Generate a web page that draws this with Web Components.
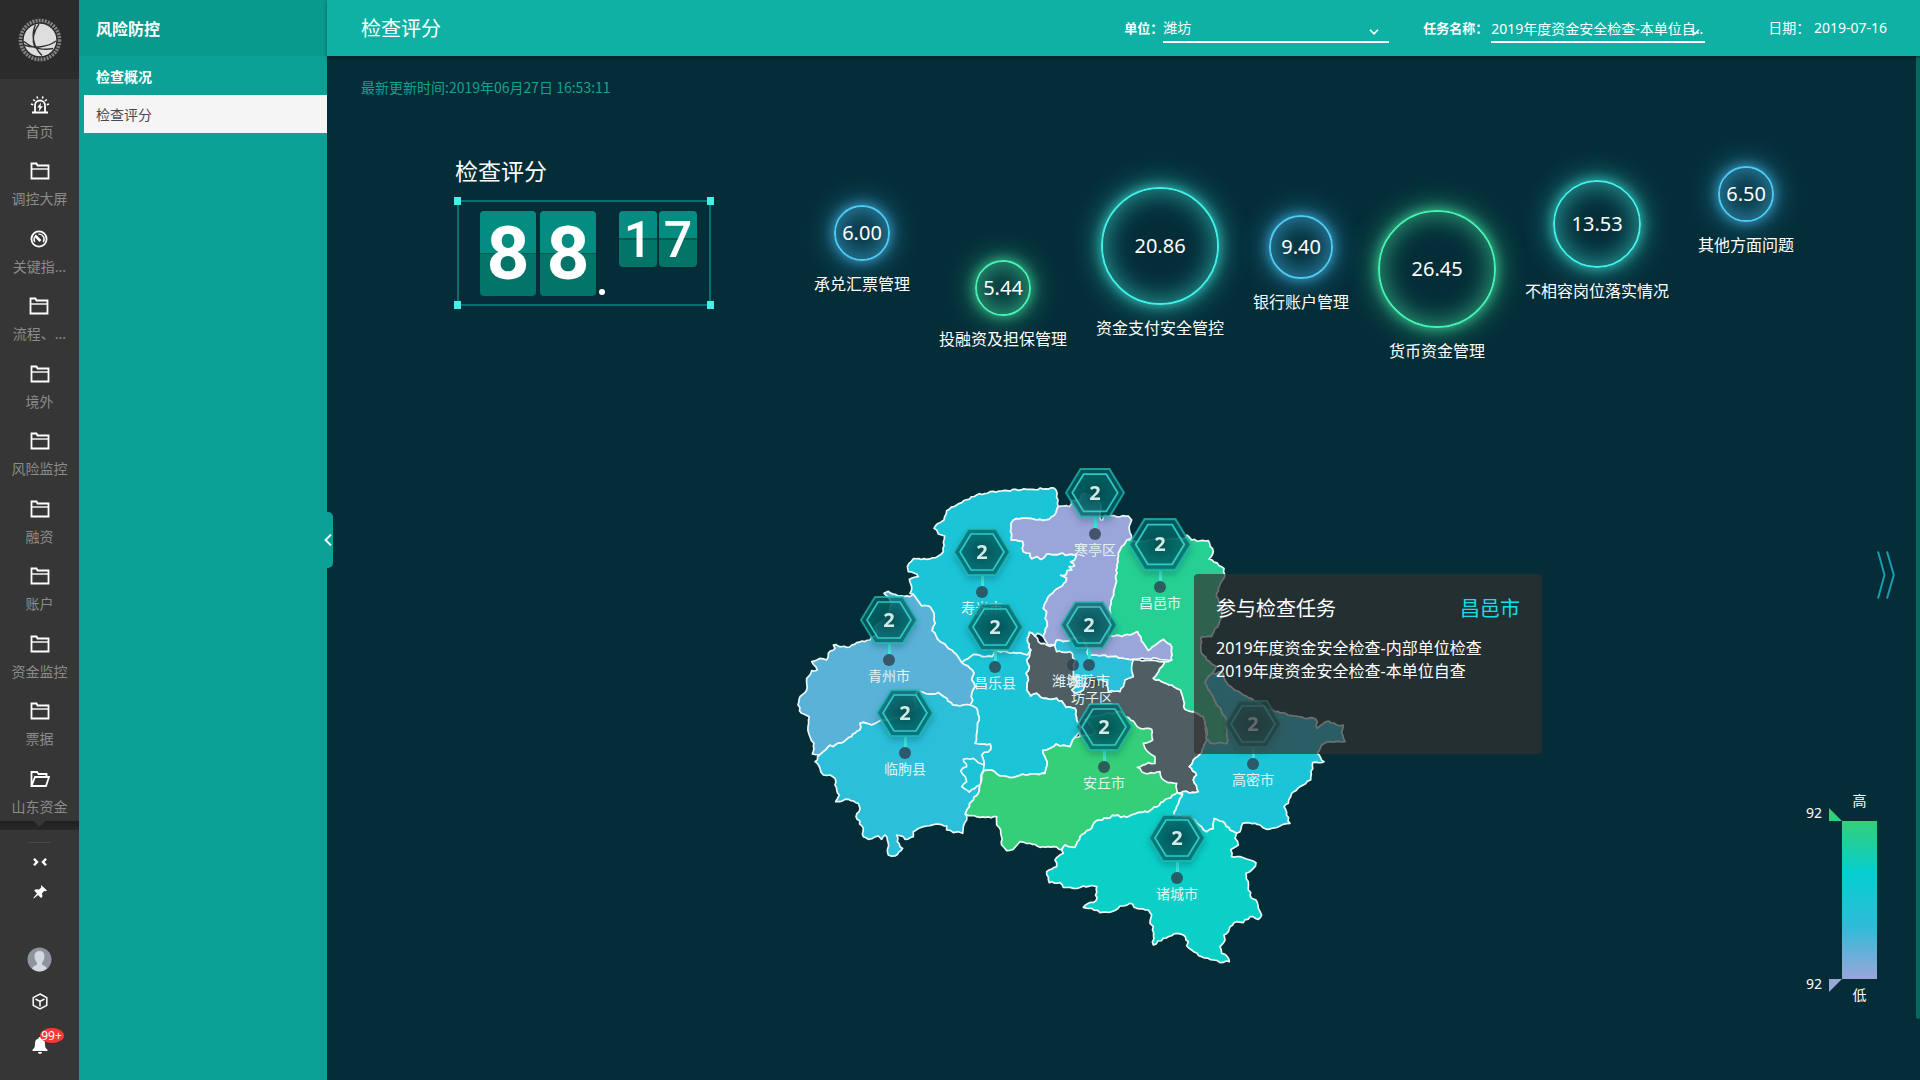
<!DOCTYPE html>
<html lang="zh-CN">
<head>
<meta charset="utf-8">
<title>检查评分</title>
<style>
html,body{margin:0;min-height:100vh;background:#042d38}
body{font:14px/20px "Noto Sans","Noto Sans CJK SC",sans-serif;color:#fff}
</style>
</head>
<body>
<risk-app></risk-app>
<script>
const define = (name, html, setup) => {
  const tpl = document.createElement('template');
  tpl.innerHTML = '<style>*{box-sizing:border-box}button{font:inherit;color:inherit;background:none;border:0;padding:0;margin:0;cursor:pointer}a{color:inherit;text-decoration:none}svg{display:block}</style>' + html;
  customElements.define(name, class extends HTMLElement {
    constructor() {
      super();
      this.attachShadow({mode: 'open'}).appendChild(tpl.content.cloneNode(true));
    }
    connectedCallback() { if (setup && !this.ready) { this.ready = true; setup(this, this.shadowRoot); } }
  });
};

/* ---------- dark icon rail ---------- */
const icons = {
  siren: '<path d="M2 17.500h16M5 17V10.500a5 5 0 0 1 10 0V17" /><path stroke-width="1.600" d="M1 9l2.200.8M19 9l-2.200.8M3.200 4.500L5 6M16.800 4.500L15 6M7 1.500l.6 2M13 1.500l-.6 2"/><path fill="#fff" stroke="none" d="M11.200 7.500l-4 5h2.300l-.8 4 4.200-5.300h-2.400z"/>',
  folder: '<path d="M1.500 16.500v-15h5l1 2h11v13z"/><path d="M1.500 7h17" stroke-width="1.400"/>',
  gauge: '<circle cx="10" cy="9" r="7.600"/><path d="M5.800 12A5.200 5.200 0 0 1 5.500 7M9.500 4.200a5 5 0 0 1 4.700 7.800" stroke-width="1.400"/><path d="M6 5.500l5.500 5.500" stroke-width="2.600"/>',
  open: '<path d="M1.500 16V2h5.500l1.500 2h8v3M1.500 16L5 7h14l-3 9z"/>'
};
define('rail-item', `
<style>
:host{flex:1;display:flex;flex-direction:column;align-items:center}
a{display:flex;flex-direction:column;align-items:center;gap:8px;padding-top:16px;color:#8b8b8b}
svg{width:20px;height:19px;fill:none;stroke:#fff;stroke-width:1.800}
</style>
<a href="#"><svg viewBox="0 0 20 19"></svg><slot></slot></a>`,
(el, root) => { root.querySelector('svg').innerHTML = icons[el.getAttribute('icon')]; });

define('side-rail', `
<style>
:host{display:flex;flex-direction:column;width:79px;flex:none;background:#363636}
.logo{height:79px;display:grid;place-items:center;background:#2b2b2b}
nav{flex:1;display:flex;flex-direction:column}
.edge{height:9px;background:linear-gradient(#202020,#292929)}
.edge i{display:block;width:12px;height:6px;margin:0 auto;background:#363636;clip-path:polygon(0 0,100% 0,50% 100%)}
.foot{height:250px;display:flex;flex-direction:column;align-items:center}
hr{width:23px;border:0;border-top:1px solid #484848;margin:12px 0 12px}
.foot button{display:grid;place-items:center;width:28px;height:14px}
.foot .pin{margin-top:15px;height:16px}
.foot .user{margin-top:46px;height:26px}
.foot .cube{margin-top:20px;height:18px}
.foot .bell{position:relative;margin-top:25px;height:20px}
.bell span{position:absolute;left:14px;top:-7px;width:24px;height:15px;border-radius:50%;background:#fa3836;font-size:12px;line-height:15px}
</style>
<div class="logo"><svg width="46" height="46" viewBox="0 0 46 46">
<circle cx="23" cy="23" r="19.500" fill="none" stroke="#858585" stroke-width="3.600" stroke-dasharray="2 1.100"/>
<circle cx="23" cy="23" r="16.300" fill="#dedede"/>
<g fill="none" stroke="#333" stroke-width="1.400"><path d="M18.500 7.500c-4 9-3.500 21 6.500 31M22 7c-6 8-7 17-4 24M7 28c10 4 24 2 32-4M7 24.500c8 7 20 9 29 7"/></g>
</svg></div>
<nav>
<rail-item icon="siren">首页</rail-item><rail-item icon="folder">调控大屏</rail-item><rail-item icon="gauge">关键指...</rail-item>
<rail-item icon="folder">流程、...</rail-item><rail-item icon="folder">境外</rail-item><rail-item icon="folder">风险监控</rail-item>
<rail-item icon="folder">融资</rail-item><rail-item icon="folder">账户</rail-item><rail-item icon="folder">资金监控</rail-item>
<rail-item icon="folder">票据</rail-item><rail-item icon="open">山东资金</rail-item>
</nav>
<div class="edge"><i></i></div>
<div class="foot">
<hr>
<button aria-label="收起"><svg width="14" height="8" viewBox="0 0 14 8" fill="none" stroke="#fff" stroke-width="2.400"><path d="M1 .8L4 4 1 7.200M13 .8L10 4l3 3.200"/></svg></button>
<button class="pin" aria-label="固定"><svg width="14" height="14" viewBox="0 0 14 14" fill="#fff"><path d="M8 0l6 5.500-1.500.8-1.500-.3-2 2.500.5 3-1.500 1.500-3-3L.8 13.500.3 13l3.700-4.500-2.800-3L2.800 4.300l3.200.3L8.200 2.500z"/></svg></button>
<button class="user" aria-label="用户"><svg width="25" height="25" viewBox="0 0 25 25"><circle cx="12.500" cy="12.500" r="12" fill="#8d949d"/><path d="M12.500 4c3.300 0 5 2 5 5.200 0 2.800-1.200 5.300-2.500 6.600v1.500c1 1.500 4 1.700 5.200 4.300a12 12 0 0 1-15.400 0C6 19 9 18.800 10 17.300v-1.500C8.700 14.500 7.500 12 7.500 9.200 7.500 6 9.200 4 12.500 4z" fill="#d3d9e1"/></svg></button>
<button class="cube" aria-label="应用"><svg width="16" height="17" viewBox="0 0 16 17" fill="none" stroke="#fff" stroke-width="1.500"><path d="M8 1l6.800 3.700v7.600L8 16l-6.800-3.700V4.700zM3.500 6L8 8.500 12.500 6M8 8.500V13.500"/></svg></button>
<button class="bell" aria-label="消息"><svg width="16" height="17" viewBox="0 0 16 17" fill="#fff"><path d="M8 0c1 0 1.500.6 1.500 1.400C12 2 13 4 13 6.500c0 4 1 5 2.500 6.300V14H.5v-1.200C2 11.500 3 10.500 3 6.500 3 4 4 2 6.500 1.400 6.500.6 7 0 8 0zM6 15h4c0 1-1 2-2 2s-2-1-2-2z"/></svg><span>99+</span></button>
</div>`);

/* ---------- green menu ---------- */
define('side-menu', `
<style>
:host{display:block;position:relative;width:248px;flex:none;background:#0ca196}
h2{margin:0;height:56px;padding:0 17px;font-size:16px;line-height:58px;background:#089a8d}
a{display:block;height:39px;padding:0 17px;line-height:41px;font-weight:700}
a.on{height:38px;margin-left:5px;padding:0 12px;line-height:40px;background:#f5f5f5;color:#454b55;font-weight:400}
button{position:absolute;z-index:3;left:244px;top:512px;width:10px;height:56px;border-radius:0 5px 5px 0;background:#0ca196;display:grid;place-items:center}
</style>
<h2>风险防控</h2>
<nav><a href="#">检查概况</a><a href="#" class="on">检查评分</a></nav>
<button aria-label="收起菜单"><svg width="8" height="12" viewBox="0 0 8 12" fill="none" stroke="#fff" stroke-width="1.800"><path d="M7 .5L1.500 6 7 11.500"/></svg></button>`);

/* ---------- header ---------- */
define('line-select', `
<style>
:host{display:flex;align-items:center}
label{font-size:13px;font-weight:700;padding-right:var(--label-gap,0)}
.box{position:relative;width:var(--w)}
select{appearance:none;display:block;width:100%;height:28px;margin:2px 0 0;padding:2px 0 var(--under,3px);border:0;border-bottom:2px solid #fff;border-radius:0;background:none;color:#fff;font:inherit;outline:0;overflow:hidden;white-space:nowrap}
option{color:#222}
svg{position:absolute;right:var(--arrow,5px);top:16px;pointer-events:none}
</style>
<label for="s"></label><div class="box"><select id="s"></select><svg width="10" height="6" viewBox="0 0 10 6" fill="none" stroke="#fff" stroke-width="1.600"><path d="M1 .8l4 4 4-4"/></svg></div>`,
(el, root) => {
  root.querySelector('label').textContent = el.getAttribute('label');
  root.querySelector('select').add(new Option(el.getAttribute('value')));
});
define('top-bar', `
<style>
:host{display:flex;align-items:center;height:56px;padding:0 33px 0 34px;background:#0eb1a3;box-shadow:0 1px 4px rgba(0,0,0,.4);position:relative;z-index:1}
h1{margin:0 auto 0 0;padding-top:2px;font-size:20px;font-weight:400;line-height:28px}
.unit{--w:226px;--arrow:10px;margin-right:34px}
.task{--w:214px;--label-gap:3px;--under:1px;margin-right:63px}
p{margin:0}
</style>
<h1>检查评分</h1>
<line-select class="unit" label="单位：" value="潍坊"></line-select>
<line-select class="task" label="任务名称：" value="2019年度资金安全检查-本单位自.."></line-select>
<p>日期： <time>2019-07-16</time></p>`);

/* ---------- flip score ---------- */
define('flip-digit', `
<style>
:host{display:grid;place-items:center;width:56px;height:85px;border-radius:4px;background:linear-gradient(#038c80 49%,#02594f 49%,#02594f 51%,#027468 51%);font:700 75px/85px "Liberation Sans Narrow",Roboto,sans-serif}
:host([small]){width:38px;height:56px;font-size:50px;line-height:58px;font-weight:500}
</style><slot></slot>`);
define('score-panel', `
<style>
:host{display:block;width:259px;flex:none}
h2{margin:0 0 13px;font-size:23px;font-weight:400;line-height:32px}
.frame{position:relative;display:flex;align-items:flex-start;margin:0 3px 0 2px;height:106px;padding:9px 0 0 21px;border:2px solid #07706f}
.frame i{position:absolute;width:7px;height:8px;background:#3ff3e6}
i:nth-of-type(1){left:-5px;top:-5px}i:nth-of-type(2){right:-5px;top:-5px}
i:nth-of-type(3){left:-5px;bottom:-5px}i:nth-of-type(4){right:-5px;bottom:-5px}
flip-digit+flip-digit{margin-left:4px}
b{width:6px;height:6px;border-radius:50%;background:#fff;margin:78px 14px 0 3px}
flip-digit[small]+flip-digit[small]{margin-left:2px}
</style>
<h2>检查评分</h2>
<div class="frame"><i></i><i></i><i></i><i></i>
<flip-digit>8</flip-digit><flip-digit>8</flip-digit><b></b><flip-digit small>1</flip-digit><flip-digit small>7</flip-digit></div>`);

/* ---------- bubbles ---------- */
define('metric-bubble', `
<style>
:host{display:flex;flex-direction:column;align-items:center;gap:12px;margin-top:var(--drop,0);font-size:16px;line-height:22px;white-space:nowrap}
div{display:grid;place-items:center;width:var(--d);height:var(--d);border-radius:50%;border:2px solid var(--c);font-size:20px;box-shadow:0 0 30px var(--g),inset 0 0 28px var(--g),0 0 12px var(--g)}
:host([tone=blue]){--c:#4ecbf5;--g:rgba(66,178,224,.75)}
:host([tone=green]){--c:#45f2b2;--g:rgba(64,214,150,.75)}
:host([tone=teal]){--c:#40f2e6;--g:rgba(58,210,200,.75)}
</style><div></div><slot></slot>`,
(el, root) => { root.querySelector('div').textContent = el.getAttribute('value'); });

/* ---------- map ---------- */
define('map-pin', `
<style>
:host{position:absolute;left:var(--x);top:var(--y);width:0;display:flex;flex-direction:column;align-items:center;color:#e2f3f3;font-size:14px;line-height:20px;white-space:nowrap}
.hex{flex:none;display:grid;width:var(--s,58px);filter:drop-shadow(0 4px 3px rgba(0,50,60,.3))}
.hex>*{grid-area:1/1}
.hex svg{width:100%;height:auto}
.hex b{place-self:center;font-size:20px;color:#d3e9e7}
.stem{flex:none;width:3px;height:10px;background:#3ce6dc}
.dot{flex:none;width:12px;height:12px;border-radius:50%;background:rgba(45,65,80,.8)}
:host([bare]) .hex,:host([bare]) .stem{display:none}
</style>
<div class="hex"><svg viewBox="0 0 58 48"><defs><radialGradient id="g"><stop offset="0" stop-color="#00494b" stop-opacity=".85"/><stop offset="1" stop-color="#04686a" stop-opacity=".45"/></radialGradient></defs>
<path d="M15 1h28l14 23-14 23H15L1 24z" fill="#036468" fill-opacity=".72" stroke="#1fbdb4" stroke-opacity=".75" stroke-width="2"/>
<path d="M18 6h22l11 18-11 18H18L7 24z" fill="url(#g)" stroke="#37dcd0" stroke-opacity=".85" stroke-width="1.700"/></svg><b>2</b></div>
<div class="stem"></div><div class="dot"></div><slot></slot>`);

define('task-tip', `
<style>
:host{display:block;position:absolute;left:414px;top:114px;z-index:2;width:348px;height:180px;padding:21px 22px;border-radius:4px;background:rgba(51,48,48,.69)}
header{display:flex;justify-content:space-between;font-size:20px;line-height:28px;margin-bottom:14px}
header span{color:#14dfe6}
p{margin:0;font-size:16px;line-height:23px;white-space:nowrap}
</style>
<header>参与检查任务<span>昌邑市</span></header>
<p>2019年度资金安全检查-内部单位检查</p><p>2019年度资金安全检查-本单位自查</p>`);

const regions = [
 ['#4e5e62','748,516 765,528 775,545 800,555 830,560 920,560 1060,598 1155,605 1120,655 1175,675 1202,690 1215,748 1240,755 1275,770 1280,840 1265,878 1240,900 1228,920 1250,945 1240,960 1255,995 1192,998 1150,1010 1000,950 900,850 900,800 890,780 885,745 858,742 850,730 830,715 815,718 790,715 770,700 752,708 740,690 745,660 738,640 748,620 740,600 748,590 752,570 742,545'],
 ['#1cc4d8','500,152 530,135 590,105 630,95 665,93 740,88 822,84 828,90 834,120 834,140 828,158 808,178 770,180 755,176 708,176 694,188 694,240 728,244 730,275 750,280 755,296 772,290 782,298 800,282 840,281 865,284 890,285 884,300 872,306 884,318 868,320 876,330 862,332 858,345 842,346 860,354 858,365 840,382 810,405 795,430 790,445 800,455 796,475 802,490 796,515 790,530 772,520 765,528 748,516 742,545 752,570 742,585 730,582 700,578 680,576 645,572 636,590 607,590 580,584 555,600 545,608 540,600 515,570 500,560 480,545 468,528 456,512 465,490 462,460 450,440 425,438 412,420 400,403 390,400 395,380 388,358 415,350 410,342 385,335 382,320 400,296 440,298 475,288 490,275 494,228 475,222 470,210 462,205 480,188 492,180'],
 ['#1cc4d8','545,608 555,600 580,584 607,590 636,590 645,572 680,576 700,578 730,582 742,585 752,570 748,590 740,600 748,620 738,640 745,660 740,690 752,708 770,700 790,715 815,718 830,715 850,730 858,742 885,745 890,780 900,800 895,820 885,832 870,860 840,858 828,852 800,870 788,872 795,890 802,905 795,940 760,942 720,946 690,953 660,948 635,930 612,932 605,945 600,975 568,996 545,980 612,915 605,885 632,868 630,852 585,850 592,800 597,770 590,745 570,735 578,720 575,700 585,680 575,660 582,640 570,625'],
 ['#5ab2d9','400,403 412,420 425,438 450,440 462,460 465,490 456,512 468,528 480,545 500,560 515,570 540,600 545,608 570,625 582,640 575,660 585,680 575,700 578,720 570,735 540,738 518,735 500,715 475,698 440,702 415,692 400,712 412,740 390,755 350,775 300,782 275,795 260,790 240,790 240,810 200,838 160,860 150,856 130,875 120,884 97,882 102,850 90,830 84,800 88,770 65,760 54,735 60,710 80,690 80,655 95,632 112,630 95,605 120,595 140,600 145,580 165,565 160,555 200,562 230,548 270,540 290,520 285,500 310,480 330,450 335,430 320,408 312,400 325,394 340,402 355,408 390,410'],
 ['#2bbfd9','120,884 130,875 150,856 160,860 200,838 240,810 240,790 260,790 275,795 300,782 350,775 390,755 412,740 400,712 415,692 440,702 475,698 500,715 518,735 540,738 570,735 590,745 597,770 592,800 585,850 630,852 632,868 605,885 612,915 568,996 600,975 595,1000 575,1025 556,1062 560,1080 550,1100 548,1120 535,1115 520,1118 500,1110 500,1098 475,1092 440,1098 400,1115 400,1130 375,1138 370,1130 350,1125 352,1145 368,1165 345,1188 325,1185 322,1140 315,1125 305,1138 295,1128 265,1138 250,1130 250,1105 228,1070 240,1045 235,1030 205,1018 180,1025 167,1025 178,1005 165,975 165,955 150,945 130,945 120,925 105,905'],
 ['#1cc4d8','550,898 580,895 605,912 612,915 600,975 568,996 545,980 560,965 556,950 542,932 560,920'],
 ['#34cf78','612,932 635,930 660,948 690,953 720,946 760,942 795,940 802,905 795,890 788,872 800,870 828,852 840,858 870,860 885,832 945,820 935,800 915,780 960,765 1020,755 1065,790 1080,805 1115,808 1118,840 1090,850 1095,865 1125,890 1125,910 1105,908 1072,922 1095,940 1140,935 1145,955 1165,968 1190,970 1192,998 1150,1025 1110,1052 1070,1060 1040,1072 1005,1067 950,1082 935,1105 900,1130 885,1162 855,1155 845,1170 820,1160 780,1162 750,1150 720,1145 700,1168 680,1172 665,1155 662,1110 650,1095 650,1070 600,1072 575,1067 556,1062 575,1025 595,1000 600,975 605,945'],
 ['#0bd0c8','1192,998 1208,1002 1190,1040 1182,1065 1230,1070 1265,1100 1280,1115 1300,1105 1302,1075 1330,1085 1350,1110 1370,1120 1365,1135 1375,1155 1352,1170 1355,1190 1380,1190 1410,1200 1428,1208 1420,1225 1398,1240 1405,1280 1415,1315 1428,1320 1435,1345 1445,1365 1435,1378 1410,1370 1390,1388 1370,1385 1350,1400 1345,1415 1332,1425 1335,1440 1320,1460 1325,1480 1342,1490 1348,1505 1320,1508 1300,1500 1265,1490 1235,1470 1220,1458 1225,1445 1210,1425 1190,1420 1150,1435 1120,1455 1120,1400 1110,1390 1115,1365 1105,1350 1070,1345 1050,1330 1020,1338 995,1355 960,1358 935,1345 910,1342 925,1330 948,1322 950,1280 910,1278 880,1285 850,1282 840,1268 808,1268 800,1235 830,1220 825,1200 850,1180 845,1170 855,1155 885,1162 900,1130 935,1105 950,1082 1005,1067 1040,1072 1070,1060 1110,1052 1150,1025'],
 ['#1cc4d8','1275,670 1290,645 1325,635 1345,675 1390,705 1440,730 1470,750 1540,768 1608,778 1612,805 1630,790 1645,783 1670,795 1690,795 1685,820 1695,845 1650,845 1625,855 1612,880 1632,905 1598,908 1592,960 1560,980 1535,1000 1525,1030 1512,1040 1530,1090 1500,1098 1460,1108 1440,1095 1400,1088 1388,1090 1380,1115 1370,1120 1350,1110 1330,1085 1302,1075 1300,1105 1280,1115 1265,1100 1230,1070 1182,1065 1190,1040 1208,1002 1192,998 1255,995 1240,960 1250,945 1228,920 1240,900 1265,878 1280,840 1340,850 1342,810 1335,770 1315,740 1300,710'],
 ['#26cf92','1040,240 1070,245 1150,235 1215,235 1220,225 1235,240 1285,242 1300,275 1287,297 1332,325 1335,345 1310,400 1325,470 1295,530 1265,530 1262,570 1280,600 1310,620 1290,645 1275,670 1300,710 1315,740 1335,770 1342,810 1340,850 1315,848 1290,850 1278,835 1282,815 1275,795 1270,770 1240,755 1215,748 1202,690 1175,675 1120,655 1155,605 1175,600 1175,560 1150,538 1105,572 1090,550 1072,515 1050,525 985,530 990,440 1005,380 1015,290 1020,270'],
 ['#9aa5da','834,140 850,138 868,140 875,122 885,122 900,120 910,100 930,105 932,112 960,128 962,180 968,180 975,165 1010,170 1045,168 1055,180 1048,210 1055,235 1040,240 1020,270 1015,290 1005,380 990,440 985,530 1050,525 1072,515 1090,550 1105,572 1150,538 1175,560 1175,600 1130,595 1060,598 1000,590 925,585 920,560 905,530 850,545 830,540 825,555 805,555 795,540 790,530 796,515 802,490 796,475 800,455 790,445 795,430 810,405 840,382 858,365 860,354 842,346 858,345 862,332 876,330 868,320 884,318 872,306 884,300 890,285 865,284 840,281 800,282 782,298 772,290 755,296 750,280 730,275 728,244 694,240 694,188 708,176 755,176 770,180 808,178 828,158'],
 ['#2bbfd9','825,560 830,540 850,545 905,530 920,560 925,585 1000,590 1060,598 1055,620 1060,650 1035,660 1030,680 1020,695 985,695 980,665 940,655 915,665 910,690 885,700 875,690 890,672 880,650 885,600 870,575 830,575']
];
/* Breaks a straight border into small uneven steps; a shared border always breaks the same way. */
const roughen = pts => pts.map((a, i) => {
  const b = pts[(i + 1) % pts.length];
  const dx = b[0] - a[0], dy = b[1] - a[1], len = Math.hypot(dx, dy), n = Math.floor(len / 8);
  let out = 'L' + a;
  for (let k = 1; k < n; k++) {
    const x = a[0] + dx * k / n, y = a[1] + dy * k / n;
    const h = Math.sin(Math.round(x) * 12.9 + Math.round(y) * 78.2) * 43758.5;
    const o = (h - Math.floor(h) - .5) * 6;
    const s = (dx > 0 || (dx === 0 && dy > 0)) ? 1 : -1;
    out += 'L' + (x - dy / len * o * s).toFixed(1) + ',' + (y + dx / len * o * s).toFixed(1);
  }
  return out;
}).join('');
define('city-map', `
<style>
:host{display:block;position:relative;width:600px;height:520px;flex:none}
svg{width:100%;height:100%}
</style>
<svg viewBox="0 0 1800 1560" stroke="#eefafa" stroke-width="5" stroke-linejoin="round"></svg>
<map-pin bare style="--x:293px;--y:199px">潍城区</map-pin>
<map-pin bare style="--x:312px;--y:216px">坊子区</map-pin>
<map-pin style="--x:202px;--y:68px">寿光市</map-pin>
<map-pin style="--x:315px;--y:8px;--s:60px">寒亭区</map-pin>
<map-pin style="--x:380px;--y:58px;--s:64px">昌邑市</map-pin>
<map-pin style="--x:109px;--y:136px">青州市</map-pin>
<map-pin style="--x:215px;--y:143px">昌乐县</map-pin>
<map-pin style="--x:309px;--y:141px">潍坊市</map-pin>
<map-pin style="--x:125px;--y:229px">临朐县</map-pin>
<map-pin style="--x:324px;--y:243px">安丘市</map-pin>
<map-pin style="--x:473px;--y:240px">高密市</map-pin>
<map-pin style="--x:397px;--y:354px">诸城市</map-pin>
<task-tip></task-tip>`,
(el, root) => {
  root.querySelector('svg').innerHTML = regions.map(([fill, p]) =>
    '<path fill="' + fill + '" d="' + roughen(p.split(' ').map(q => q.split(',').map(Number))).replace('L', 'M') + 'Z"/>').join('');
});

/* ---------- legend ---------- */
define('heat-legend', `
<style>
:host{display:grid;grid-template-columns:36px 35px;line-height:20px}
.end{grid-column:2;text-align:center}
.marks{display:flex;flex-direction:column;justify-content:space-between;margin:-18px 0 -16px}
.marks div{display:flex;justify-content:space-between}
i{width:13px;height:13px;background:#34cf78;clip-path:polygon(0 0,100% 100%,0 100%);align-self:flex-end;margin-bottom:5px}
.marks div+div i{background:#9aa5da;clip-path:polygon(0 0,100% 0,0 100%);align-self:flex-start;margin:3px 0 0}
.marks div:first-child{height:23px}
.marks div+div{height:19px;line-height:16px}
.bar{height:158px;background:linear-gradient(#34cf78,#06cfd0 33%,#30bbd8 67%,#9aa5da)}
.hi{margin-bottom:10px}.lo{margin-top:6px}
</style>
<span class="end hi">高</span>
<div class="marks"><div>92<i></i></div><div>92<i></i></div></div><div class="bar"></div>
<span class="end lo">低</span>`);

/* ---------- page ---------- */
define('risk-app', `
<style>
:host{display:flex;min-height:100vh}
main{flex:1;min-width:0;display:flex;flex-direction:column;position:relative}
.stamp{margin:21px 0 0 34px;color:#0fa294;font-family:"Noto Sans CJK SC",sans-serif}
.top{display:flex;gap:100px;padding:58px 0 0 128px;height:306px}
.bubbles{display:flex;align-items:flex-start;gap:29px;padding-top:11px}
.stage{display:flex;padding:57px 43px 0 453px}
aside{margin-left:auto;display:flex;flex-direction:column;align-items:flex-end}
aside button{margin:90px -18px 191px 0}
.scroll{position:absolute;right:0;top:56px;width:4px;height:963px;background:#076863;border-radius:2px}
</style>
<side-rail></side-rail><side-menu></side-menu>
<main>
<top-bar></top-bar>
<p class="stamp">最新更新时间:2019年06月27日 16:53:11</p>
<section class="top"><score-panel></score-panel>
<div class="bubbles">
<metric-bubble tone="blue" value="6.00" style="--d:56px;--drop:39px">承兑汇票管理</metric-bubble>
<metric-bubble tone="green" value="5.44" style="--d:56px;--drop:94px">投融资及担保管理</metric-bubble>
<metric-bubble tone="teal" value="20.86" style="--d:118px;--drop:21px">资金支付安全管控</metric-bubble>
<metric-bubble tone="blue" value="9.40" style="--d:64px;--drop:49px">银行账户管理</metric-bubble>
<metric-bubble tone="green" value="26.45" style="--d:118px;--drop:44px">货币资金管理</metric-bubble>
<metric-bubble tone="teal" value="13.53" style="--d:88px;--drop:14px">不相容岗位落实情况</metric-bubble>
<metric-bubble tone="blue" value="6.50" style="--d:56px">其他方面问题</metric-bubble>
</div></section>
<section class="stage"><city-map></city-map>
<aside><button aria-label="展开"><svg width="18" height="50" viewBox="0 0 18 50" fill="none" stroke="#139fae" stroke-width="2"><path d="M1 1.500L7.500 25 1 48.500M10 1.500L16.800 25 10 48.500"/></svg></button>
<heat-legend></heat-legend></aside></section>
<div class="scroll"></div>
</main>`);
</script>
</body>
</html>
